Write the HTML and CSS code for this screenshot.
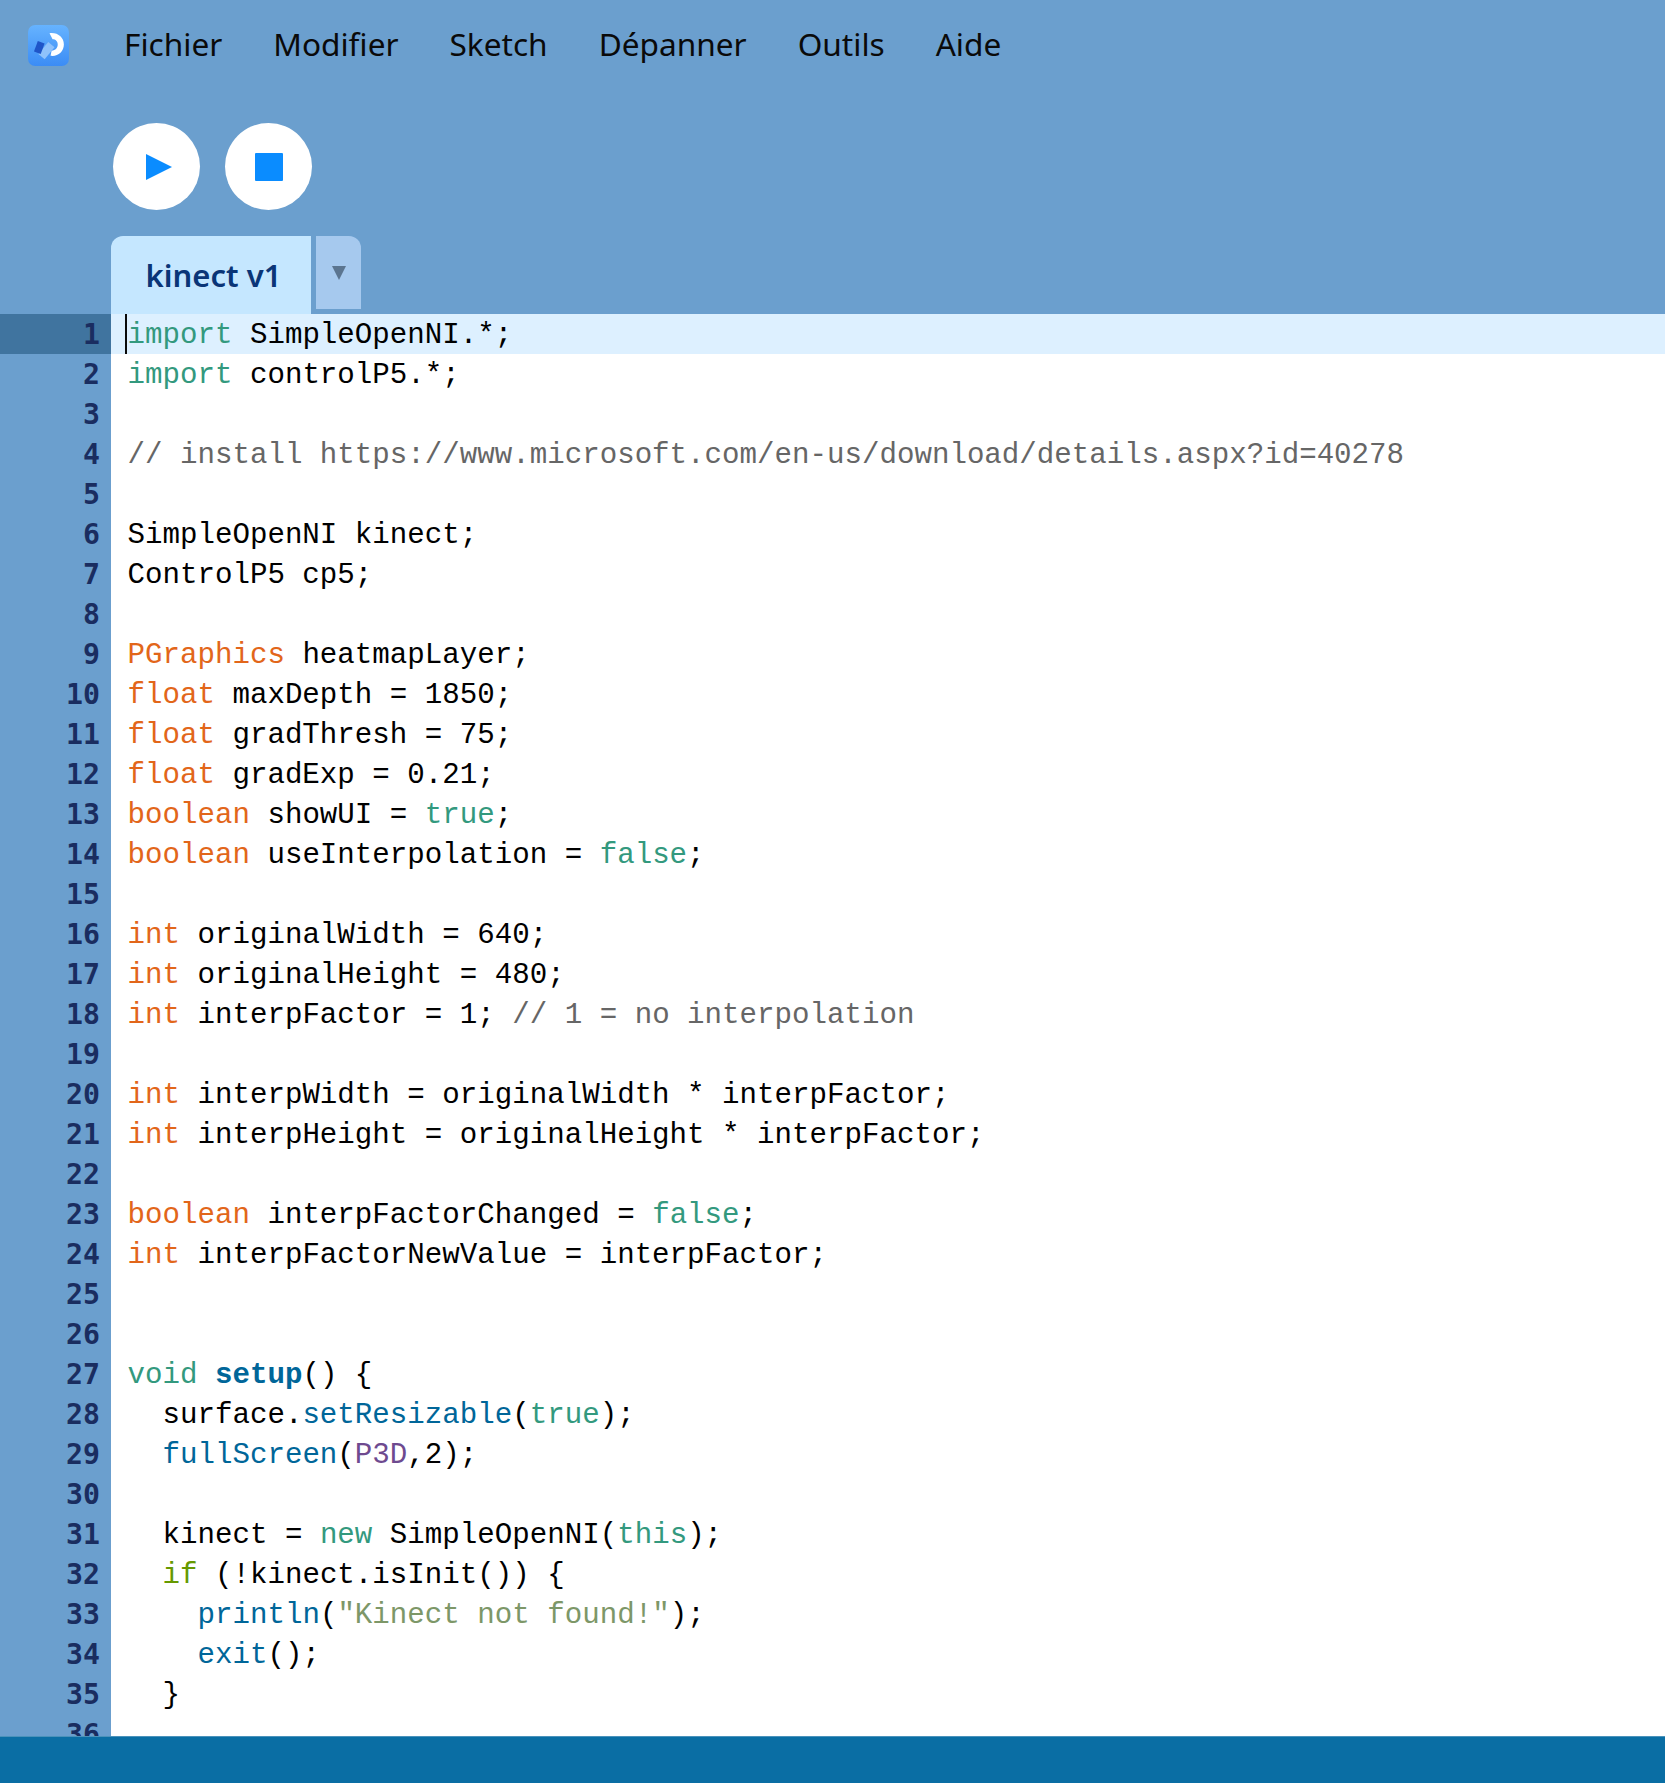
FILE: index.html
```html
<!DOCTYPE html>
<html lang="fr">
<head>
<meta charset="utf-8">
<title>kinect v1</title>
<link rel="stylesheet" href="styles.css">
</head>
<body>
<div class="app">
  <header class="top">
    <nav class="menubar">
      <svg class="logo" viewBox="0 0 40 40" width="41" height="41">
        <defs><linearGradient id="lg" x1="0" y1="0" x2="0" y2="1"><stop offset="0" stop-color="#66b3ff"/><stop offset="1" stop-color="#3b8cf5"/></linearGradient></defs>
        <rect width="40" height="40" rx="7" fill="url(#lg)"/>
        <path d="M21 8 C29 7 35 12 35 19 C35 26 29 31 22 30 L23 25 C27 25 29 22 29 19 C29 16 27 14 24 14 Z" fill="#fff"/>
        <rect x="14" y="17.5" width="8" height="15" transform="rotate(40 18 25)" fill="#8fc2fb"/>
        <rect x="7.5" y="16.5" width="7" height="11" transform="rotate(20 11 22)" fill="#1f55c8"/>
      </svg>
      <span class="menu">Fichier</span>
      <span class="menu">Modifier</span>
      <span class="menu">Sketch</span>
      <span class="menu">Dépanner</span>
      <span class="menu">Outils</span>
      <span class="menu">Aide</span>
    </nav>
    <div class="toolbar">
      <button class="round play"><svg viewBox="0 0 28 28" width="28" height="28"><path d="M1 1 L27 14 L1 27 Z" fill="#0a8cff"/></svg></button>
      <button class="round"><svg viewBox="0 0 28 28" width="28" height="28"><rect width="28" height="28" rx="1" fill="#0a8cff"/></svg></button>
    </div>
    <div class="tabs">
      <div class="tab">kinect v1</div>
      <div class="tabmenu"><svg viewBox="0 0 14 14" width="14" height="14"><path d="M0 0 H14 L7 14 Z" fill="#5b7590"/></svg></div>
    </div>
  </header>
  <main class="editor">
    <div class="line current"><span class="num">1</span><span class="code"><i class="caret"></i><b class="kw">import</b> SimpleOpenNI.*;</span></div>
    <div class="line"><span class="num">2</span><span class="code"><b class="kw">import</b> controlP5.*;</span></div>
    <div class="line"><span class="num">3</span><span class="code"></span></div>
    <div class="line"><span class="num">4</span><span class="code"><b class="com">// install https://www.microsoft.com/en-us/download/details.aspx?id=40278</b></span></div>
    <div class="line"><span class="num">5</span><span class="code"></span></div>
    <div class="line"><span class="num">6</span><span class="code">SimpleOpenNI kinect;</span></div>
    <div class="line"><span class="num">7</span><span class="code">ControlP5 cp5;</span></div>
    <div class="line"><span class="num">8</span><span class="code"></span></div>
    <div class="line"><span class="num">9</span><span class="code"><b class="ty">PGraphics</b> heatmapLayer;</span></div>
    <div class="line"><span class="num">10</span><span class="code"><b class="ty">float</b> maxDepth = 1850;</span></div>
    <div class="line"><span class="num">11</span><span class="code"><b class="ty">float</b> gradThresh = 75;</span></div>
    <div class="line"><span class="num">12</span><span class="code"><b class="ty">float</b> gradExp = 0.21;</span></div>
    <div class="line"><span class="num">13</span><span class="code"><b class="ty">boolean</b> showUI = <b class="kw">true</b>;</span></div>
    <div class="line"><span class="num">14</span><span class="code"><b class="ty">boolean</b> useInterpolation = <b class="kw">false</b>;</span></div>
    <div class="line"><span class="num">15</span><span class="code"></span></div>
    <div class="line"><span class="num">16</span><span class="code"><b class="ty">int</b> originalWidth = 640;</span></div>
    <div class="line"><span class="num">17</span><span class="code"><b class="ty">int</b> originalHeight = 480;</span></div>
    <div class="line"><span class="num">18</span><span class="code"><b class="ty">int</b> interpFactor = 1; <b class="com">// 1 = no interpolation</b></span></div>
    <div class="line"><span class="num">19</span><span class="code"></span></div>
    <div class="line"><span class="num">20</span><span class="code"><b class="ty">int</b> interpWidth = originalWidth * interpFactor;</span></div>
    <div class="line"><span class="num">21</span><span class="code"><b class="ty">int</b> interpHeight = originalHeight * interpFactor;</span></div>
    <div class="line"><span class="num">22</span><span class="code"></span></div>
    <div class="line"><span class="num">23</span><span class="code"><b class="ty">boolean</b> interpFactorChanged = <b class="kw">false</b>;</span></div>
    <div class="line"><span class="num">24</span><span class="code"><b class="ty">int</b> interpFactorNewValue = interpFactor;</span></div>
    <div class="line"><span class="num">25</span><span class="code"></span></div>
    <div class="line"><span class="num">26</span><span class="code"></span></div>
    <div class="line"><span class="num">27</span><span class="code"><b class="kw">void</b> <b class="fn">setup</b>() {</span></div>
    <div class="line"><span class="num">28</span><span class="code">  surface.<b class="call">setResizable</b>(<b class="kw">true</b>);</span></div>
    <div class="line"><span class="num">29</span><span class="code">  <b class="call">fullScreen</b>(<b class="lit">P3D</b>,2);</span></div>
    <div class="line"><span class="num">30</span><span class="code"></span></div>
    <div class="line"><span class="num">31</span><span class="code">  kinect = <b class="kw">new</b> SimpleOpenNI(<b class="kw">this</b>);</span></div>
    <div class="line"><span class="num">32</span><span class="code">  <b class="ctl">if</b> (!kinect.isInit()) {</span></div>
    <div class="line"><span class="num">33</span><span class="code">    <b class="call">println</b>(<b class="str">"Kinect not found!"</b>);</span></div>
    <div class="line"><span class="num">34</span><span class="code">    <b class="call">exit</b>();</span></div>
    <div class="line"><span class="num">35</span><span class="code">  }</span></div>
    <div class="line"><span class="num">36</span><span class="code"></span></div>
  </main>
  <footer class="status"></footer>
</div>
</body>
</html>
```
FILE: styles.css
```css
* { box-sizing: border-box; }
html, body { margin: 0; padding: 0; height: 100%; }
.app {
  display: flex;
  flex-direction: column;
  height: 1783px;
  overflow: hidden;
  background: #6b9fce;
}
.top { height: 314px; flex: none; display: flex; flex-direction: column; background: #6b9fce; }
.menubar {
  display: flex;
  align-items: center;
  height: 90px;
  padding-left: 28px;
  font-family: "Noto Sans", sans-serif;
  font-size: 31.6px;
  color: #0a0a0a;
}
.logo { flex: none; margin-right: 55px; }
.menu { margin-right: 51px; padding-bottom: 3px; }
.toolbar { display: flex; gap: 25px; padding: 33px 0 0 113px; height: 146px; }
.round {
  width: 87px;
  height: 87px;
  border: 0;
  padding: 0;
  border-radius: 50%;
  background: #fff;
  display: flex;
  align-items: center;
  justify-content: center;
}
.play { padding-left: 5px; }
.tabs { display: flex; gap: 5px; padding-left: 111px; align-items: flex-start; }
.tab {
  width: 200px;
  height: 78px;
  background: #c5e7ff;
  border-radius: 12px 0 0 0;
  color: #0a3577;
  font-family: "Noto Sans", sans-serif;
  font-weight: 600;
  font-size: 31px;
  display: flex;
  align-items: center;
  justify-content: center;
  padding-left: 5px;
}
.tabmenu {
  width: 45px;
  height: 73px;
  background: #a6c9ee;
  border-radius: 0 12px 0 0;
  display: flex;
  align-items: center;
  justify-content: center;
}
.editor { flex: 1; min-height: 0; overflow: hidden; background: #fff; }
.line { display: flex; height: 40px; line-height: 40px; }
.num {
  width: 111px;
  flex: none;
  background: #6b9fce;
  color: #1a2d60;
  font-family: "DejaVu Sans Mono", monospace;
  font-weight: 700;
  font-size: 28.2px;
  line-height: 41px;
  text-align: right;
  padding-right: 11px;
}
.code {
  position: relative;
  flex: 1;
  padding-left: 16.5px;
  white-space: pre;
  color: #000;
  font-family: "Liberation Mono", monospace;
  font-size: 29.15px;
  line-height: 44px;
}
.code b { font-weight: 400; }
.current .num { background: #40749f; }
.current .code { background: #ddf0ff; }
.caret { position: absolute; left: 14px; top: 0; width: 2px; height: 40px; background: #0a0a0a; }
.kw { color: #33997e; }
.ty { color: #e2661a; }
.com { color: #666; }
.code .fn { color: #006699; font-weight: 700; }
.call { color: #006699; }
.lit { color: #6e4a8f; }
.ctl { color: #669900; }
.str { color: #7d9768; }
.status { height: 47px; flex: none; background: #0a6ea4; border-top: 1px solid #4b92bb; }
```
